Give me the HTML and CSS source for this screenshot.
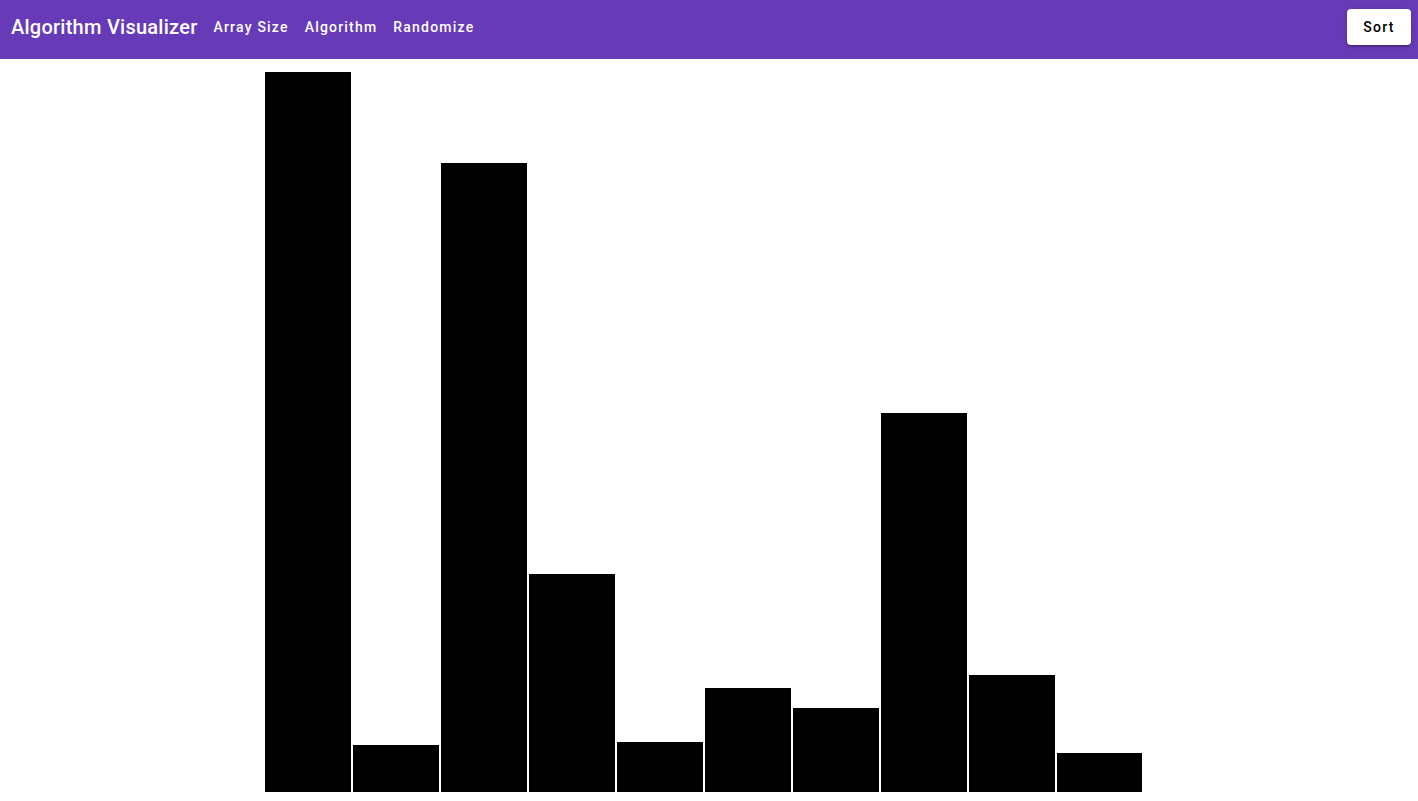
FILE: index.html
```html
<!DOCTYPE html>
<html lang="en">
<head>
    <meta charset="UTF-8">
    <meta name="viewport" content="width=device-width, initial-scale=1.0">
    <title>Algorithm Visualizer</title>
    <link rel="stylesheet" href="styles.css">
</head>
<body>
    <header class="navbar">
        <h1 class="title">Algorithm Visualizer</h1>
        <nav class="menu">
            <button class="menu-item">Array Size</button>
            <button class="menu-item">Algorithm</button>
            <button class="menu-item">Randomize</button>
        </nav>
        <button class="sort-btn">Sort</button>
    </header>

    <main class="bars">
        <div class="bar" style="height: 720px"></div>
        <div class="bar" style="height: 47px"></div>
        <div class="bar" style="height: 629px"></div>
        <div class="bar" style="height: 218px"></div>
        <div class="bar" style="height: 50px"></div>
        <div class="bar" style="height: 104px"></div>
        <div class="bar" style="height: 84px"></div>
        <div class="bar" style="height: 379px"></div>
        <div class="bar" style="height: 117px"></div>
        <div class="bar last" style="height: 39px"></div>
    </main>
</body>
</html>
```

FILE: styles.css
```css
body {
    font-family: Roboto, "Liberation Sans", sans-serif;
    margin: 0;
    padding: 0;
    background-color: #fff;
    overflow: hidden;
}

.navbar {
    height: 59px;
    background-color: #673ab7;
    display: flex;
    align-items: center;
    padding: 0 7px 6px 11px;
    box-sizing: border-box;
}

.title {
    margin: 0;
    font-size: 20px;
    font-weight: 500;
    color: #fff;
    letter-spacing: 0.25px;
}

.menu {
    display: flex;
    margin-left: 8px;
    flex: 1;
}

.menu-item {
    background: none;
    border: none;
    color: #fff;
    font-family: inherit;
    font-size: 14px;
    font-weight: 500;
    letter-spacing: 1.2px;
    padding: 6px 8px;
    cursor: pointer;
}

.sort-btn {
    background-color: #fff;
    color: #000;
    border: none;
    border-radius: 4px;
    font-family: inherit;
    font-size: 14px;
    font-weight: 500;
    letter-spacing: 1.25px;
    width: 64px;
    height: 36px;
    box-shadow: 0 3px 1px -2px rgba(0,0,0,0.2), 0 2px 2px 0 rgba(0,0,0,0.14), 0 1px 5px 0 rgba(0,0,0,0.12);
    cursor: pointer;
}

.bars {
    display: flex;
    align-items: flex-end;
    height: 733px;
    padding-left: 264px;
}

.bar {
    width: 86px;
    margin: 0 1px;
    background-color: #000;
}

.bar.last {
    width: 85px;
}
```
